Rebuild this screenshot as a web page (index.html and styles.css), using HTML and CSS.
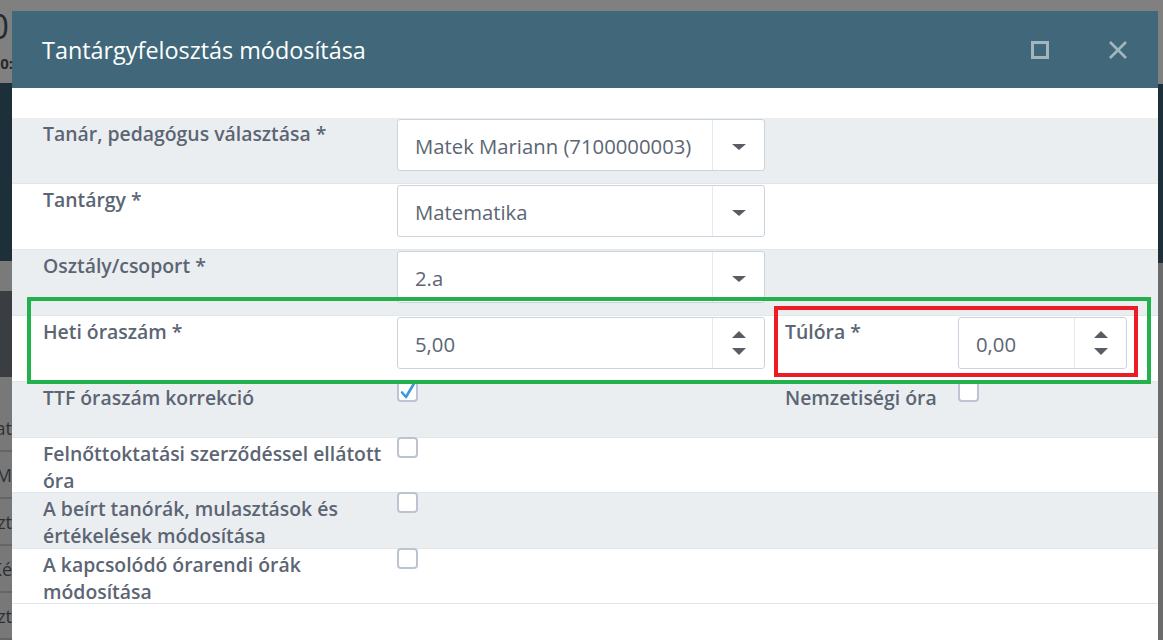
FILE: index.html
```html
<!DOCTYPE html>
<html lang="hu">
<head>
<meta charset="utf-8">
<title>Tantárgyfelosztás módosítása</title>
<link rel="stylesheet" href="styles.css">
</head>
<body>
<div class="bg-page">
  <div class="bg-main">
    <div class="bg-top">
      <div class="bg-edge edge-big"><span class="bg-big">2020</span></div>
      <div class="bg-edge edge-small"><span class="bg-small">2020:</span></div>
    </div>
    <div class="bg-dark"></div>
    <div class="bg-gap"></div>
    <div class="bg-bar"></div>
    <div class="bg-list">
      <div class="bg-row"><div class="bg-edge"><span>Osztály, csoport adat</span></div></div>
      <div class="bg-row"><div class="bg-edge"><span>M</span></div></div>
      <div class="bg-row"><div class="bg-edge"><span>Óraszám, heti ózt</span></div></div>
      <div class="bg-row"><div class="bg-edge"><span>Ké</span></div></div>
      <div class="bg-row"><div class="bg-edge"><span>Osztályzt</span></div></div>
    </div>
  </div>
  <div class="bg-side"></div>
</div>

<div class="modal">
  <div class="modal-head">
    <h1 class="modal-title">Tantárgyfelosztás módosítása</h1>
    <div class="head-tools">
      <span class="tool-max"></span>
      <svg class="tool-close" viewBox="0 0 20 20" width="20" height="20"><path d="M2 2 L18 18 M18 2 L2 18"/></svg>
    </div>
  </div>
  <div class="modal-body">
    <div class="form-row row-input">
      <div class="label">Tanár, pedagógus választása *</div>
      <div class="field"><span class="val">Matek Mariann (7100000003)</span><span class="addon addon-caret"><i class="tri-down"></i></span></div>
    </div>
    <div class="form-row row-input">
      <div class="label">Tantárgy *</div>
      <div class="field"><span class="val">Matematika</span><span class="addon addon-caret"><i class="tri-down"></i></span></div>
    </div>
    <div class="form-row row-input">
      <div class="label">Osztály/csoport *</div>
      <div class="field"><span class="val">2.a</span><span class="addon addon-caret"><i class="tri-down"></i></span></div>
    </div>
    <div class="form-row row-input">
      <div class="label">Heti óraszám *</div>
      <div class="field"><span class="val">5,00</span><span class="addon addon-spin"><i class="tri-up"></i><i class="tri-down"></i></span></div>
      <div></div>
      <div class="label">Túlóra *</div>
      <div class="field"><span class="val">0,00</span><span class="addon addon-spin"><i class="tri-up"></i><i class="tri-down"></i></span></div>
    </div>
    <div class="form-row row-check row-tall">
      <div class="label">TTF óraszám korrekció</div>
      <div><span class="check"><svg viewBox="0 0 21 21" width="21" height="21"><path d="M5 11.5 L9 16 L17 2.5"/></svg></span></div>
      <div></div>
      <div class="label">Nemzetiségi óra</div>
      <div><span class="check"></span></div>
    </div>
    <div class="form-row row-check">
      <div class="label">Felnőttoktatási szerződéssel ellátott óra</div>
      <div><span class="check"></span></div>
    </div>
    <div class="form-row row-check row-tall">
      <div class="label">A beírt tanórák, mulasztások és értékelések módosítása</div>
      <div><span class="check"></span></div>
    </div>
    <div class="form-row row-check">
      <div class="label">A kapcsolódó órarendi órák módosítása</div>
      <div><span class="check"></span></div>
    </div>
  </div>
</div>

<div class="hl hl-green"></div>
<div class="hl hl-red"></div>
</body>
</html>
```
FILE: styles.css
```css
* { box-sizing: border-box; }
html, body { margin: 0; padding: 0; }
body {
  width: 1163px;
  height: 640px;
  overflow: hidden;
  position: relative;
  background: #7f7f7f;
  font-family: "Open Sans", "Liberation Sans", sans-serif;
}

/* background page under the overlay */
.bg-page { display: flex; height: 640px; }
.bg-main { flex: 1; display: flex; flex-direction: column; }
.bg-side { width: 5px; display: flex; flex-direction: column; background: linear-gradient(#808080 0 84px, #1d2f38 84px 263px, #6b6b6b 263px); }
.bg-top { height: 84px; background: #808080; padding-top: 7px; }
.bg-edge { width: 12px; display: flex; justify-content: flex-end; white-space: nowrap; }
.edge-big { width: 9px; }
.edge-small { width: 13px; }
.bg-big { font-size: 34px; line-height: 38px; color: #262a2e; }
.bg-small { font-size: 15px; line-height: 22px; font-weight: 700; color: #262a2e; margin-top: 7px; }
.bg-dark { height: 179px; background: #1d2f38; }
.bg-gap { height: 30px; background: #7a7a7a; }
.bg-bar { height: 87px; background: #3a3d41; }
.bg-list { flex: 1; background: #787878; padding-top: 28px; }
.bg-row { height: 47px; border-bottom: 2px solid #656565; padding-top: 12px; }
.bg-row span { font-size: 18px; line-height: 22px; color: #2c3035; }

/* modal */
.modal {
  position: absolute;
  left: 12px;
  top: 11px;
  width: 1146px;
  bottom: 0;
  background: #fff;
}
.modal-head {
  height: 77px;
  background: #41687a;
  display: flex;
  align-items: center;
  justify-content: space-between;
  padding: 0 30px 0 30px;
}
.modal-title {
  margin: 0;
  font-size: 23.4px;
  font-weight: 400;
  color: #fff;
  line-height: 30px;
}
.head-tools { display: flex; align-items: center; gap: 59px; }
.tool-max {
  width: 18px;
  height: 18px;
  border: 3px solid #a3b5bd;
}
.tool-close { width: 20px; height: 20px; }
.tool-close path { stroke: #a3b5bd; stroke-width: 2.6; fill: none; }

.modal-body { padding-top: 30px; }
.form-row {
  display: grid;
  grid-template-columns: 354px 368px 20px 173px 169px;
  padding-left: 31px;
  border-bottom: 1px solid #e2e6ea;
  align-items: start;
}
.form-row:nth-child(odd) { background: #ebeef1; }
.row-input { height: 66px; padding-top: 1px; }
.row-check { height: 55px; }
.row-tall { height: 56px; }
.label {
  font-size: 19.4px;
  line-height: 27px;
  font-weight: 600;
  color: #5b6573;
  padding-top: 2px;
  padding-right: 10px;
}
.row-input .label { padding-top: 1px; }
.field {
  height: 52px;
  border: 1px solid #cbd4de;
  border-radius: 3px;
  background: #fff;
  display: flex;
}
.val {
  flex: 1;
  padding-left: 17px;
  font-size: 20.3px;
  line-height: 50px;
  color: #5b6573;
  padding-top: 1px;
  white-space: nowrap;
}
.addon {
  width: 52px;
  border-left: 1px solid #e6e9ed;
  display: flex;
  align-items: center;
  justify-content: center;
}
.addon-caret { padding-top: 3px; }
.addon-spin { flex-direction: column; gap: 10px; }
.tri-down, .tri-up { display: block; width: 0; height: 0; border-left: 7px solid transparent; border-right: 7px solid transparent; }
.tri-down { border-top: 7px solid #585d63; }
.addon-caret .tri-down { border-left-width: 7px; border-right-width: 7px; border-top-width: 6px; }
.tri-up { border-bottom: 7px solid #585d63; }

.check {
  display: block;
  width: 21px;
  height: 21px;
  margin-top: -1px;
  border: 2px solid #bcc5cf;
  border-radius: 4px;
  background: #fff;
  position: relative;
}
.check svg { position: absolute; left: -2px; top: -2px; overflow: visible; }
.check svg path { stroke: #3a9ad9; stroke-width: 2.6; fill: none; stroke-linecap: round; stroke-linejoin: round; }

/* highlight boxes drawn over the form */
.hl { position: absolute; border-style: solid; border-width: 4px; }
.hl-green { left: 27px; top: 297px; width: 1124px; height: 87px; border-color: #22b14c; }
.hl-red { left: 774px; top: 306px; width: 364px; height: 71px; border-color: #ed1c24; }
```
